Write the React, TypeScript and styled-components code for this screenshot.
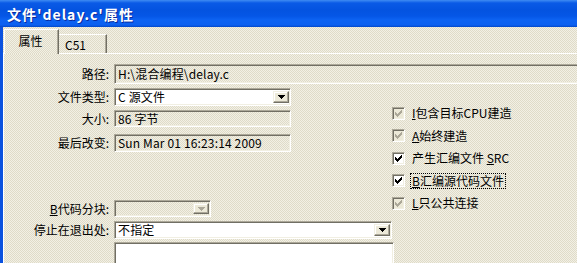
import React from "react";
import styled, { createGlobalStyle } from "styled-components";

const GlobalStyle = createGlobalStyle`
  html, body {
    margin: 0;
    padding: 0;
    width: 577px;
    height: 263px;
    overflow: hidden;
    background: #ECE9D8;
  }
  body {
    font-family: "Noto Sans CJK SC", "Liberation Sans", sans-serif;
    font-size: 12px;
    color: #000;
  }
`;

const face = `repeating-conic-gradient(#F2F0E5 0 25%, #DFDBC8 0 50%) 0 0 / 2px 2px`;

const Window = styled.div`
  width: 577px;
  height: 263px;
  display: flex;
  flex-direction: column;
  overflow: hidden;
`;

const TitleBar = styled.div`
  height: 27px;
  flex: none;
  display: flex;
  align-items: center;
  padding-left: 7px;
  background: linear-gradient(
    to bottom,
    #3F8CF3 0px,
    #0A5AE6 3px,
    #0453E0 10px,
    #0556E6 16px,
    #0D63F2 20px,
    #0C60F0 25px,
    #0348C8 27px
  );
  color: #fff;
  font-weight: bold;
  font-size: 14px;
  letter-spacing: 1px;
  text-shadow: 1px 1px 0 #0A2A9C;
  white-space: nowrap;
`;

const Frame = styled.div`
  flex: 1;
  display: flex;
  flex-direction: column;
  border-left: 3px solid #0B52DF;
  background: ${face};
  padding-top: 2px;
`;

const TabStrip = styled.div`
  height: 24px;
  flex: none;
  display: flex;
  align-items: flex-end;
  padding-left: 1px;
  position: relative;
  z-index: 1;
`;

const Tab = styled.div<{ $active?: boolean }>`
  box-sizing: border-box;
  display: flex;
  justify-content: ${(p) => (p.$active ? "center" : "flex-start")};
  align-items: center;
  width: ${(p) => (p.$active ? 55 : 48)}px;
  height: ${(p) => (p.$active ? 25 : 19)}px;
  margin-bottom: ${(p) => (p.$active ? -1 : 0)}px;
  padding: ${(p) => (p.$active ? "0 2px 3px 0" : "2px 0 0 6px")};
  border-top: 1px solid #fff;
  border-left: ${(p) => (p.$active ? "1px solid #fff" : "none")};
  border-right: 1px solid #716F64;
  box-shadow: inset -1px 0 0 #ACA899;
  background: ${face};
  font-size: 12px;
  line-height: 14px;
`;

const Panel = styled.div`
  flex: 1;
  border-top: 1px solid #fff;
  border-left: 1px solid #fff;
  padding-top: 10px;
  display: flex;
  flex-direction: column;
`;

const Row = styled.div<{ $mt?: number }>`
  display: flex;
  align-items: center;
  margin-top: ${(p) => p.$mt ?? 0}px;
`;

const Label = styled.div`
  width: 105px;
  flex: none;
  text-align: right;
  padding-right: 5px;
  line-height: 14px;
  white-space: nowrap;
`;

const Field = styled.div<{ $w?: number; $h?: number; $white?: boolean }>`
  box-sizing: border-box;
  flex: none;
  width: ${(p) => (p.$w ? `${p.$w}px` : "600px")};
  height: ${(p) => p.$h ?? 18}px;
  display: flex;
  align-items: center;
  padding-left: 2px;
  border: 1px solid;
  border-color: #ACA899 #fff #fff #ACA899;
  box-shadow: inset 1px 1px 0 #716F64, inset -1px -1px 0 #F1EFE2;
  background: ${(p) => (p.$white ? "#fff" : face)};
  line-height: 14px;
  white-space: nowrap;
  overflow: hidden;
`;

const FieldText = styled.span`
  flex: 1;
  padding-left: 1px;
  letter-spacing: 0.15px;
`;

const DropButton = styled.div`
  box-sizing: border-box;
  width: 16px;
  flex: none;
  display: flex;
  align-items: center;
  justify-content: center;
  border: 1px solid;
  border-color: #F1EFE2 #716F64 #716F64 #F1EFE2;
  box-shadow: inset -1px -1px 0 #ACA899, inset 1px 1px 0 #fff;
  background: #ECE9D8;
  margin: 2px 1px 2px 0;
  height: calc(100% - 4px);
`;

const Columns = styled.div`
  display: flex;
`;

const LeftCol = styled.div`
  width: 388px;
  flex: none;
  display: flex;
  flex-direction: column;
`;

const CheckCol = styled.div`
  display: flex;
  flex-direction: column;
  padding-top: 18px;
`;

const CheckRow = styled.div`
  height: 22.5px;
  display: flex;
  align-items: center;
  gap: 6px;
  white-space: nowrap;
  line-height: 14px;
`;

const Box = styled.div<{ $disabled?: boolean }>`
  box-sizing: border-box;
  width: 13px;
  height: 13px;
  flex: none;
  display: flex;
  align-items: center;
  justify-content: center;
  border: 1px solid;
  border-color: #ACA899 #fff #fff #ACA899;
  box-shadow: inset 1px 1px 0 #716F64, inset -1px -1px 0 #F1EFE2;
  background: ${(p) => (p.$disabled ? "#ECE9D8" : "#fff")};
`;

const CheckText = styled.span<{ $focus?: boolean }>`
  color: #000;
  outline: ${(p) => (p.$focus ? "1px dotted #000" : "none")};
  padding: 0 1px;
`;

const U = styled.span`
  text-decoration: underline;
  text-underline-offset: 1px;
`;

const Arrow = ({ disabled }: { disabled?: boolean }) => (
  <svg width="7" height="4" viewBox="0 0 7 4" shapeRendering="crispEdges">
    <path d="M0 0h7v1h-1v1h-1v1h-1v1h-1v-1h-1v-1h-1v-1h-1z" fill={disabled ? "#ACA899" : "#000"} />
  </svg>
);

const Check = ({ disabled }: { disabled?: boolean }) => (
  <svg width="7" height="7" viewBox="0 0 7 7" shapeRendering="crispEdges">
    <path
      d="M0 2h1v3h-1z M1 3h1v3h-1z M2 4h1v3h-1z M3 3h1v3h-1z M4 2h1v3h-1z M5 1h1v3h-1z M6 0h1v3h-1z"
      fill={disabled ? "#ACA899" : "#000"}
    />
  </svg>
);

type Opt = { text: React.ReactNode; disabled?: boolean; focus?: boolean };

const options: Opt[] = [
  { text: <><U>I</U>包含目标CPU建造</>, disabled: true },
  { text: <><U>A</U>始终建造</>, disabled: true },
  { text: <>产生汇编文件 <U>S</U>RC</> },
  { text: <><U>B</U>汇编源代码文件</>, focus: true },
  { text: <><U>L</U>只公共连接</>, disabled: true },
];

export default function App() {
  return (
    <>
      <GlobalStyle />
      <Window>
        <TitleBar>文件'delay.c'属性</TitleBar>
        <Frame>
          <TabStrip>
            <Tab $active>属性</Tab>
            <Tab>C51</Tab>
          </TabStrip>
          <Panel>
            <Row>
              <Label>路径:</Label>
              <Field $h={20}>
                <FieldText>H:\混合编程\delay.c</FieldText>
              </Field>
            </Row>
            <Columns>
              <LeftCol>
                <Row $mt={4}>
                  <Label>文件类型:</Label>
                  <Field $w={177} $white>
                    <FieldText>C 源文件</FieldText>
                    <DropButton>
                      <Arrow />
                    </DropButton>
                  </Field>
                </Row>
                <Row $mt={4}>
                  <Label>大小:</Label>
                  <Field $w={177} $h={17}>
                    <FieldText>86 字节</FieldText>
                  </Field>
                </Row>
                <Row $mt={7}>
                  <Label>最后改变:</Label>
                  <Field $w={177}>
                    <FieldText>Sun Mar 01 16:23:14 2009</FieldText>
                  </Field>
                </Row>
                <Row $mt={48}>
                  <Label>
                    <U>B</U>代码分块:
                  </Label>
                  <Field $w={97} $h={17}>
                    <FieldText />
                    <DropButton>
                      <Arrow disabled />
                    </DropButton>
                  </Field>
                </Row>
                <Row $mt={4}>
                  <Label>停止在退出处:</Label>
                  <Field $w={278} $white>
                    <FieldText>不指定</FieldText>
                    <DropButton>
                      <Arrow />
                    </DropButton>
                  </Field>
                </Row>
                <Row $mt={3}>
                  <Label />
                  <Field $w={280} $h={40} $white />
                </Row>
              </LeftCol>
              <CheckCol>
                {options.map((o, i) => (
                  <CheckRow key={i}>
                    <Box $disabled={o.disabled}>
                      <Check disabled={o.disabled} />
                    </Box>
                    <CheckText $focus={o.focus}>{o.text}</CheckText>
                  </CheckRow>
                ))}
              </CheckCol>
            </Columns>
          </Panel>
        </Frame>
      </Window>
    </>
  );
}
